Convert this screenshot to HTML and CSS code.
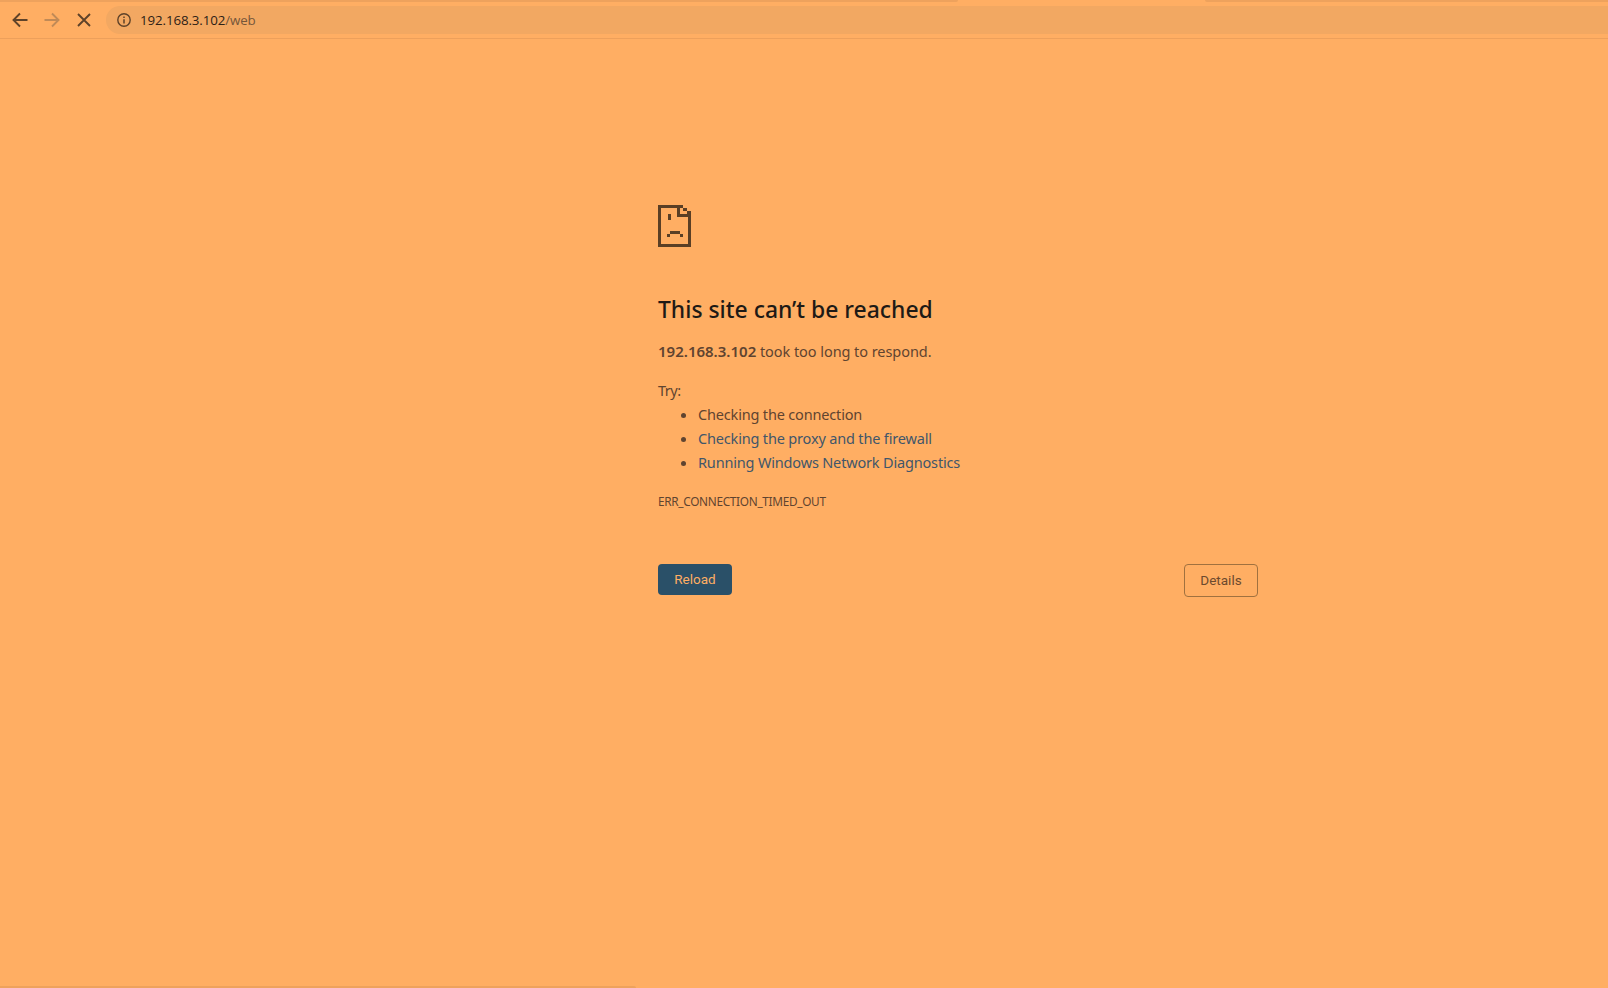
FILE: index.html
```html
<!DOCTYPE html>
<html lang="en">
<head>
    <meta charset="UTF-8">
    <title>192.168.3.102</title>
    <link rel="stylesheet" href="styles.css">
</head>
<body>
    <div class="tabstrip">
        <div class="strip-dark strip-left"></div>
        <div class="strip-gap"></div>
        <div class="strip-dark strip-right"></div>
    </div>

    <div class="toolbar">
        <span class="nav-btn">
            <svg width="16" height="16" viewBox="0 0 16 16"><path d="M15.5 8H1.5M8 1.5L1.5 8L8 14.5" fill="none" stroke="#5e4229" stroke-width="1.9"/></svg>
        </span>
        <span class="nav-btn">
            <svg width="16" height="16" viewBox="0 0 16 16"><path d="M.5 8H14.5M8 1.5L14.5 8L8 14.5" fill="none" stroke="#c08a57" stroke-width="1.9"/></svg>
        </span>
        <span class="nav-btn">
            <svg width="16" height="16" viewBox="0 0 16 16"><path d="M2 2L14 14M14 2L2 14" fill="none" stroke="#5e4229" stroke-width="1.9"/></svg>
        </span>
        <div class="address">
            <svg class="info" width="16" height="16" viewBox="0 0 16 16"><circle cx="8" cy="8" r="6.2" fill="none" stroke="#5e4229" stroke-width="1.4"/><path d="M8 7.2V11.6M8 4.4V6" fill="none" stroke="#5e4229" stroke-width="1.5"/></svg>
            <span class="host">192.168.3.102</span><span class="path">/web</span>
        </div>
    </div>

    <div class="page">
        <div class="error">
            <svg class="sad-icon" width="33" height="42" viewBox="0 0 33 42" shape-rendering="crispEdges">
                <!-- page outline and folded corner -->
                <path fill="#5a3f25" d="M0 0H25V3H3V39H30V12H19V3H22V9H33V42H0Z"/>
                <path fill="#5a3f25" d="M25 3H29V6H25ZM29 6H33V9H29Z"/>
                <!-- eye and frown -->
                <path fill="#5a3f25" d="M10 9H13V15H10ZM12 26H22V29H12ZM9 29H12V32H9ZM22 29H25V32H22Z"/>
            </svg>
            <h1>This site can’t be reached</h1>
            <p class="summary"><b>192.168.3.102</b> took too long to respond.</p>
            <p class="try">Try:</p>
            <ul>
                <li>Checking the connection</li>
                <li><a>Checking the proxy and the firewall</a></li>
                <li><a>Running Windows Network Diagnostics</a></li>
            </ul>
            <div class="code">ERR_CONNECTION_TIMED_OUT</div>
            <div class="buttons">
                <button class="reload">Reload</button>
                <button class="details">Details</button>
            </div>
        </div>
    </div>

    <div class="statusline"></div>
</body>
</html>
```

FILE: styles.css
```css
html, body {
    height: 100%;
}

body {
    margin: 0;
    display: flex;
    flex-direction: column;
    background-color: #ffae63;
    font-family: "Noto Sans", "Open Sans", sans-serif;
    color: #5f4430;
    overflow: hidden;
}

/* Browser chrome */
.tabstrip {
    display: flex;
    height: 6px;
    flex: none;
}

.strip-dark {
    height: 2px;
    background-color: #eea25d;
}

.strip-left {
    width: 958px;
    border-bottom-right-radius: 2px;
}

.strip-gap {
    width: 247px;
}

.strip-right {
    flex: 1;
    border-bottom-left-radius: 2px;
}

.toolbar {
    display: flex;
    align-items: flex-start;
    height: 32px;
    flex: none;
    border-bottom: 1px solid #eda05b;
    padding-left: 4px;
}

.nav-btn {
    width: 32px;
    height: 28px;
    display: flex;
    justify-content: center;
    align-items: center;
}

.address {
    flex: 1;
    display: flex;
    align-items: center;
    height: 28px;
    margin-left: 6px;
    padding-left: 10px;
    background-color: #f2a862;
    border-radius: 14px 0 0 14px;
    font-family: "Open Sans", sans-serif;
    font-size: 13.3px;
    letter-spacing: -0.1px;
}

.info {
    margin-right: 8px;
}

.host {
    color: #2d2116;
}

.path {
    color: #75563a;
}

/* Error content */
.page {
    flex: 1;
    padding: 166px 0 0 658px;
}

.error {
    width: 600px;
}

.sad-icon {
    display: block;
}

h1 {
    margin: 47px 0 0;
    font-size: 22.9px;
    line-height: 32px;
    font-weight: 500;
    color: #1e1a16;
}

p {
    margin: 0;
    font-size: 14.5px;
    line-height: 24px;
    letter-spacing: -0.06px;
}

.summary {
    margin-top: 13px;
}

.summary b {
    font-size: 15px;
    font-weight: 600;
    letter-spacing: 0;
}

.try {
    margin-top: 15px;
    letter-spacing: -0.5px;
}

ul {
    margin: 0;
    padding-left: 40px;
    font-size: 14.5px;
    line-height: 24px;
    letter-spacing: -0.17px;
}

a {
    color: #41566a;
}

.code {
    margin-top: 17px;
    font-size: 11.8px;
    line-height: 20px;
    letter-spacing: -0.3px;
}

.buttons {
    display: flex;
    justify-content: space-between;
    align-items: flex-start;
    margin-top: 53px;
}

button {
    width: 74px;
    font-family: Roboto, sans-serif;
    font-size: 13.5px;
    font-weight: 400;
    border-radius: 4px;
    padding: 0 0 2px;
}

.reload {
    height: 31px;
    background-color: #2a5068;
    color: #ffae63;
    border: 0;
}

.details {
    height: 33px;
    background: transparent;
    color: #6c4a2e;
    border: 1px solid #a0713f;
}

.statusline {
    flex: none;
    width: 636px;
    height: 2px;
    background-color: #eea25d;
    border-top-right-radius: 2px;
}
```
